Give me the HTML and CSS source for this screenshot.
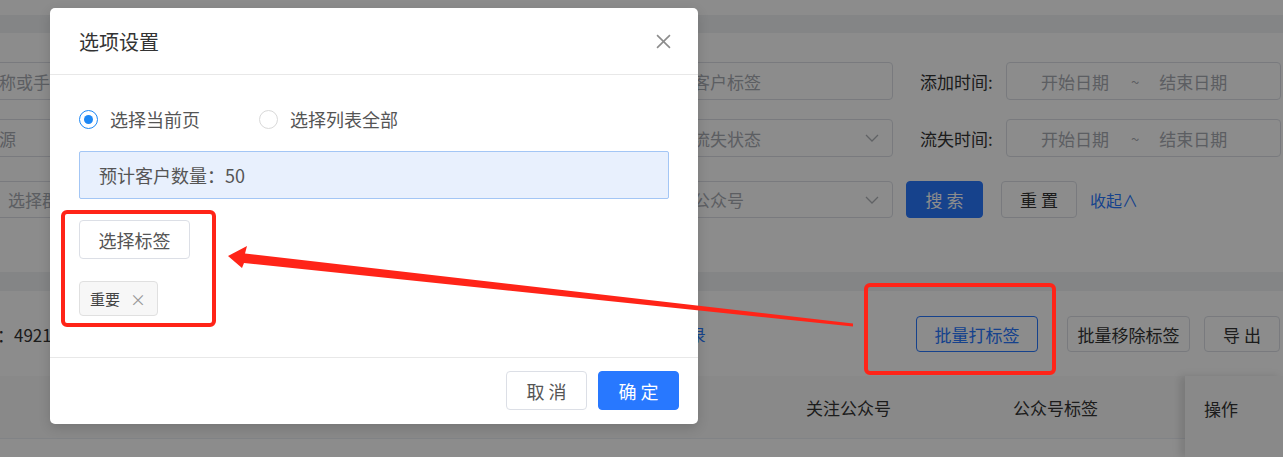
FILE: index.html
```html
<!DOCTYPE html>
<html>
<head>
    <meta charset="utf-8">
    <title>客户列表</title>
    <link rel="stylesheet" href="styles.css">
</head>
<body>
    <div class="topbar"></div>
    <div class="panel filter-panel">
        <div class="filter-row">
            <div class="field first"><span class="ph">昵称或手机号</span></div>
            <span class="lbl">客户标签：</span>
            <div class="field mid"><span class="ph">客户标签</span></div>
            <span class="lbl time">添加时间:</span>
            <div class="field range"><span>开始日期</span><span class="tilde">~</span><span>结束日期</span></div>
        </div>
        <div class="filter-row">
            <div class="field first"><span class="ph">来源</span></div>
            <span class="lbl">流失状态：</span>
            <div class="field mid select"><span class="ph">流失状态</span><svg class="chev" viewBox="0 0 14 8"><polyline points="1,1 7,7 13,1"/></svg></div>
            <span class="lbl time">流失时间:</span>
            <div class="field range"><span>开始日期</span><span class="tilde">~</span><span>结束日期</span></div>
        </div>
        <div class="filter-row last">
            <div class="field first group"><span class="ph">选择群聊</span></div>
            <span class="lbl">关注公众号：</span>
            <div class="field mid select"><span class="ph">公众号</span><svg class="chev" viewBox="0 0 14 8"><polyline points="1,1 7,7 13,1"/></svg></div>
            <button class="btn primary search">搜 索</button>
            <button class="btn reset">重 置</button>
            <a class="fold">收起∧</a>
        </div>
    </div>

    <div class="panel list-panel">
        <div class="toolbar">
            <span class="total">：4921</span>
            <a class="export-log">查看导出记录</a>
            <div class="actions">
                <button class="btn outline-blue">批量打标签</button>
                <button class="btn remove">批量移除标签</button>
                <button class="btn">导 出</button>
            </div>
        </div>
        <div class="table-head">
            <span class="col follow">关注公众号</span>
            <span class="col mp-tag">公众号标签</span>
            <span class="col op">操作</span>
        </div>
    </div>

    <div class="mask"></div>

    <div class="modal">
        <div class="modal-header">
            <span class="modal-title">选项设置</span>
            <svg class="close" viewBox="0 0 14 14"><line x1="1" y1="1" x2="13" y2="13"/><line x1="13" y1="1" x2="1" y2="13"/></svg>
        </div>
        <div class="modal-body">
            <div class="radios">
                <label class="radio checked"><span class="dot"></span>选择当前页</label>
                <label class="radio"><span class="dot"></span>选择列表全部</label>
            </div>
            <div class="info">预计客户数量：50</div>
            <button class="btn pick">选择标签</button>
            <div class="tags">
                <span class="tag">重要<span class="tag-x">×</span></span>
            </div>
        </div>
        <div class="modal-footer">
            <button class="btn cancel">取 消</button>
            <button class="btn primary ok">确 定</button>
        </div>
    </div>

    <svg class="marks" viewBox="0 0 1283 457">
        <rect x="63" y="212" width="151" height="113" rx="4"/>
        <rect x="866" y="285" width="188" height="88" rx="4"/>
        <polygon class="arrow" points="228,256 247,246 245,253.5 853,323.5 853,326.5 244,263 242,268"/>
    </svg>
</body>
</html>
```

FILE: styles.css
```css
body {
    margin: 0;
    width: 1283px;
    height: 457px;
    overflow: hidden;
    position: relative;
    background-color: #f0f2f5;
    font-family: "Noto Sans CJK SC", "Liberation Sans", sans-serif;
    color: #333;
}
.topbar {
    height: 15px;
    background-color: #fff;
    margin-bottom: 18px;
}
.panel {
    background-color: #fff;
}
.filter-panel {
    padding: 29px 0 54px;
}
.filter-row {
    display: flex;
    align-items: center;
    height: 38px;
    margin-left: -30px;
    margin-bottom: 19px;
}
.filter-row.last {
    height: 37px;
    margin-top: 24px;
    margin-bottom: 0;
}
.field {
    box-sizing: border-box;
    height: 100%;
    border: 1px solid #dcdfe6;
    border-radius: 4px;
    display: flex;
    align-items: center;
    padding-left: 11px;
    font-size: 17px;
    color: #a8abb2;
    position: relative;
    white-space: nowrap;
}
.field.first {
    width: 340px;
}
.field.group {
    padding-left: 37px;
}
.lbl {
    box-sizing: border-box;
    width: 371px;
    text-align: right;
    padding-right: 6px;
    font-size: 17px;
    white-space: nowrap;
}
.field.mid {
    width: 212px;
}
.chev {
    position: absolute;
    right: 13px;
    top: 14px;
    width: 14px;
    height: 8px;
    fill: none;
    stroke: #b0b3b8;
    stroke-width: 1.3;
}
.lbl.time {
    width: 77px;
    margin-left: 27px;
    padding-right: 0;
    text-align: left;
    color: #333;
}
.field.range {
    width: 275px;
    margin-left: 9px;
    padding-left: 34px;
}
.tilde {
    margin: 0 20px 0 22px;
    font-size: 15px;
}
.btn {
    box-sizing: border-box;
    height: 36px;
    padding: 0;
    border: 1px solid #dcdfe6;
    border-radius: 4px;
    background-color: #fff;
    color: #333;
    font-family: inherit;
    font-size: 17px;
    line-height: 1;
    white-space: nowrap;
    cursor: pointer;
}
.btn.primary {
    background-color: #2878ff;
    border-color: #2878ff;
    color: #fff;
}
.btn.search {
    width: 77px;
    height: 37px;
    margin-left: 13px;
}
.btn.reset {
    width: 76px;
    height: 37px;
    margin-left: 18px;
}
.fold {
    margin-left: 13px;
    font-size: 16px;
    color: #2878ff;
}
.list-panel {
    margin-top: 19px;
    height: 166px;
}
.toolbar {
    display: flex;
    align-items: center;
    height: 36px;
    padding-top: 25px;
    margin-left: -3px;
}
.total {
    font-size: 17px;
}
.export-log {
    margin-left: 558px;
    font-size: 16px;
    color: #2878ff;
    white-space: nowrap;
}
.actions {
    margin-left: auto;
    display: flex;
    gap: 14px;
    margin-right: 3px;
}
.btn.outline-blue {
    width: 122px;
    border-color: #2878ff;
    color: #2878ff;
    margin-right: 15px;
}
.btn.remove {
    width: 123px;
}
.actions .btn:last-child {
    width: 76px;
}
.table-head {
    margin-top: 24px;
    height: 62px;
    border-bottom: 1px solid #ebeef5;
    background-color: #fafafa;
    display: flex;
    align-items: center;
    font-size: 17px;
    position: relative;
}
.col.follow {
    margin-left: 806px;
}
.col.mp-tag {
    margin-left: 122px;
}
.col.op {
    position: absolute;
    left: 1185px;
    top: 0;
    bottom: -19px;
    width: 98px;
    padding: 20px 0 0 19px;
    box-sizing: border-box;
    background-color: #fafafa;
    box-shadow: -5px 0 8px rgba(0, 0, 0, 0.12);
}
.mask {
    position: absolute;
    inset: 0;
    background-color: rgba(0, 0, 0, 0.45);
}
.modal {
    position: absolute;
    left: 50px;
    top: 8px;
    width: 648px;
    background-color: #fff;
    border-radius: 5px;
    box-shadow: 0 4px 12px rgba(0, 0, 0, 0.15);
}
.modal-header {
    height: 66px;
    border-bottom: 1px solid #e8e8e8;
    display: flex;
    align-items: center;
    padding: 0 27px 0 29px;
}
.modal-title {
    font-size: 20px;
    color: #333;
}
.close {
    margin-left: auto;
    width: 15px;
    height: 15px;
    stroke: #8c8c8c;
    stroke-width: 1.5;
}
.modal-body {
    padding: 35px 29px 41px;
}
.radios {
    display: flex;
    height: 18px;
    align-items: center;
}
.radio {
    display: flex;
    align-items: center;
    font-size: 18px;
    color: #555;
    margin-right: 59px;
}
.dot {
    box-sizing: border-box;
    width: 19px;
    height: 19px;
    border: 1px solid #d9d9d9;
    border-radius: 50%;
    margin-right: 12px;
    position: relative;
}
.radio.checked .dot {
    border-color: #1e88f5;
}
.radio.checked .dot::after {
    content: "";
    position: absolute;
    left: 4px;
    top: 4px;
    width: 9px;
    height: 9px;
    border-radius: 50%;
    background-color: #1e88f5;
}
.info {
    margin-top: 23px;
    box-sizing: border-box;
    height: 48px;
    padding-left: 19px;
    display: flex;
    align-items: center;
    background-color: #e8f0fd;
    border: 1px solid #a3c6f5;
    border-radius: 2px;
    font-size: 18px;
    color: #555;
}
.btn.pick {
    margin-top: 21px;
    width: 111px;
    height: 39px;
    font-size: 18px;
    color: #555;
}
.tags {
    margin-top: 22px;
    display: flex;
}
.tag {
    box-sizing: border-box;
    height: 35px;
    padding: 0 11px 0 10px;
    display: flex;
    align-items: center;
    background-color: #f7f7f7;
    border: 1px solid #e0e0e0;
    border-radius: 4px;
    font-size: 15px;
    color: #444;
}
.tag-x {
    margin-left: 10px;
    color: #999;
    font-size: 16px;
}
.modal-footer {
    border-top: 1px solid #e8e8e8;
    padding: 13px 19px 14px;
    display: flex;
    justify-content: flex-end;
    gap: 11px;
}
.btn.cancel, .btn.ok {
    width: 81px;
    height: 39px;
    font-size: 18px;
}
.btn.cancel {
    color: #555;
}
.marks {
    position: absolute;
    left: 0;
    top: 0;
    width: 1283px;
    height: 457px;
    pointer-events: none;
}
.marks rect {
    fill: none;
    stroke: #ff2418;
    stroke-width: 4;
}
.marks .arrow {
    fill: #ff2418;
}
```
